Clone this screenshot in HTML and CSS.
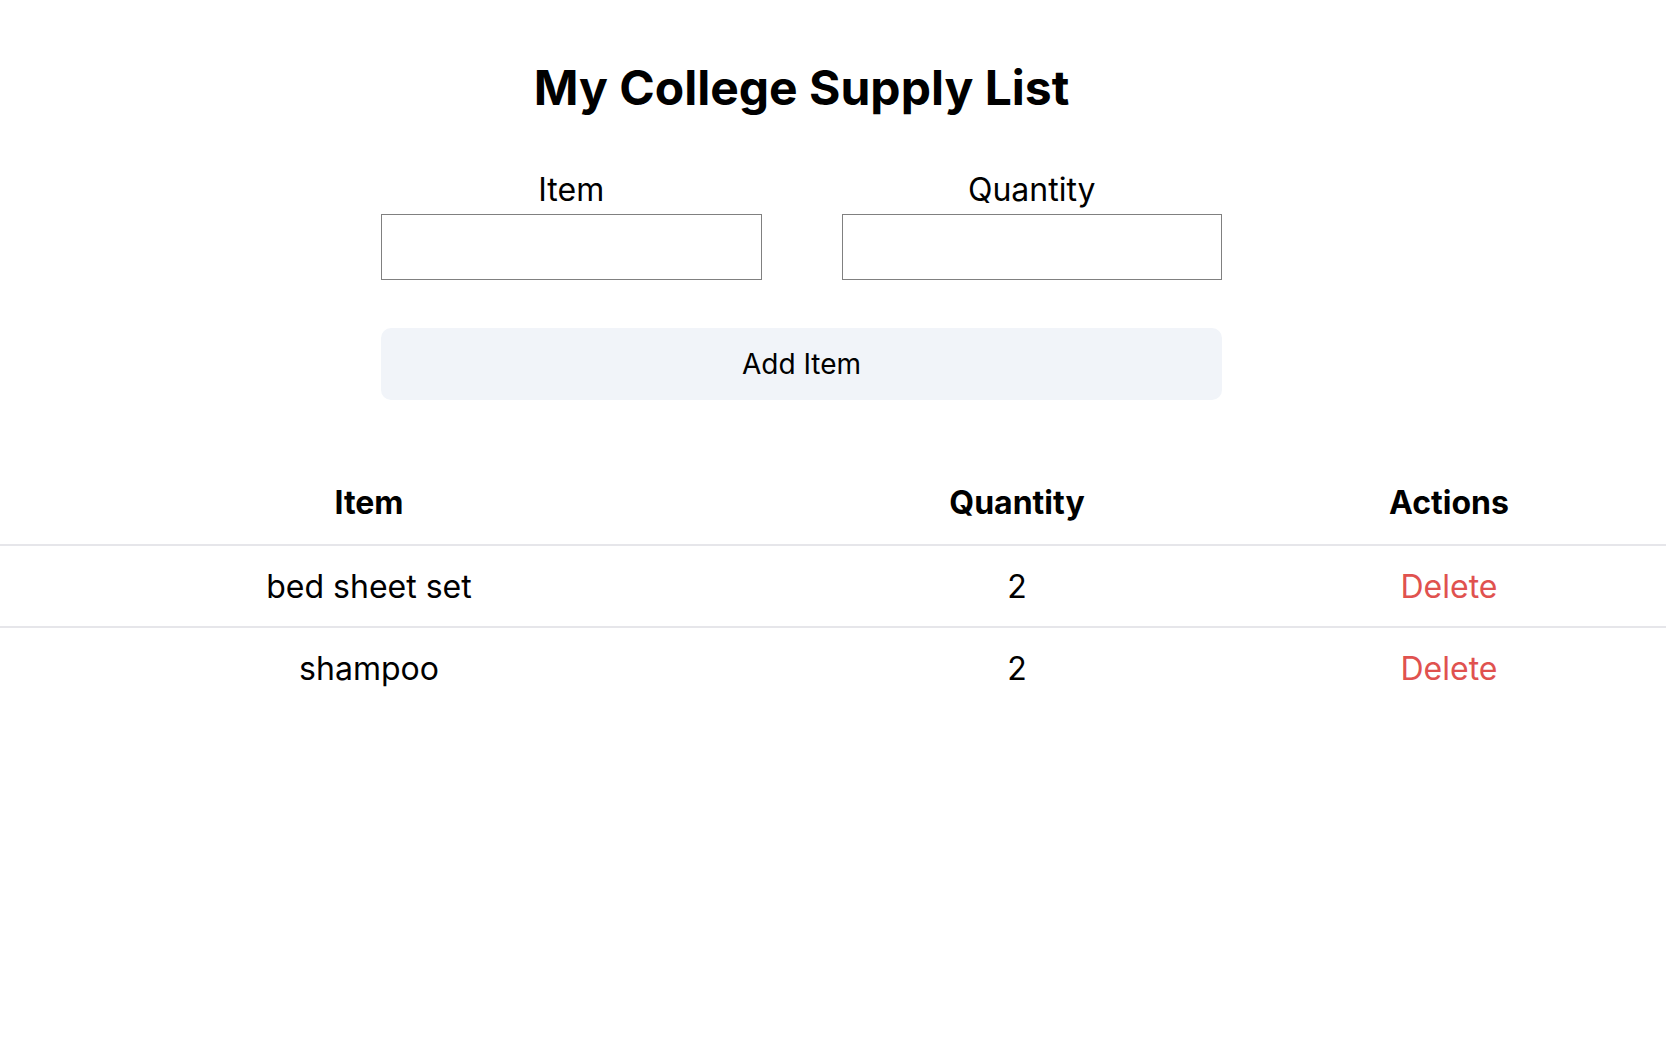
FILE: index.html
```html
<!DOCTYPE html>
<html lang="en">
<head>
<meta charset="utf-8">
<title>My College Supply List</title>
<link rel="stylesheet" href="styles.css">
</head>
<body>
<div class="app">
  <h1 class="title">My College Supply List</h1>
  <form class="form">
    <div class="fields">
      <label class="field">
        <span class="field-label">Item</span>
        <input class="field-input" type="text">
      </label>
      <label class="field">
        <span class="field-label">Quantity</span>
        <input class="field-input" type="text">
      </label>
    </div>
    <button class="add-btn" type="button">Add Item</button>
  </form>
  <table class="list">
    <colgroup>
      <col class="col-item">
      <col class="col-qty">
      <col class="col-act">
      <col class="col-pad">
    </colgroup>
    <thead>
      <tr><th>Item</th><th>Quantity</th><th>Actions</th><th></th></tr>
    </thead>
    <tbody>
      <tr><td>bed sheet set</td><td>2</td><td><span class="del">Delete</span></td><td></td></tr>
      <tr><td>shampoo</td><td>2</td><td><span class="del">Delete</span></td><td></td></tr>
    </tbody>
  </table>
</div>
</body>
</html>
```

FILE: styles.css
```css
html, body {
  margin: 0;
  padding: 0;
  background: #ffffff;
}
body {
  font-family: Inter, "Liberation Sans", sans-serif;
  color: #000000;
}
.app {
  width: 1603px;
}
.title {
  margin: 57px 0 0;
  font-size: 48px;
  line-height: 62px;
  font-weight: 700;
  text-align: center;
}
.form {
  width: 841px;
  margin: 53px auto 0;
  display: flex;
  flex-direction: column;
  gap: 48px;
}
.fields {
  display: flex;
  gap: 80px;
}
.field {
  flex: 1;
  display: flex;
  flex-direction: column;
  align-items: stretch;
  gap: 6px;
}
.field-label {
  font-size: 32px;
  line-height: 36px;
  text-align: center;
}
.field-input {
  box-sizing: border-box;
  height: 66px;
  width: 100%;
  margin: 0;
  border: 1px solid #808080;
  border-radius: 0;
  font-family: inherit;
  font-size: 30px;
  padding: 0 12px;
}
.add-btn {
  height: 72px;
  border: none;
  border-radius: 10px;
  background: #f1f4f9;
  font-family: inherit;
  font-size: 28px;
  color: #000;
  cursor: pointer;
}
.list {
  margin-top: 65px;
  width: 1666px;
  table-layout: fixed;
  border-collapse: separate;
  border-spacing: 0;
}
.col-item { width: 738px; }
.col-qty { width: 558px; }
.col-act { width: 306px; }
.col-pad { width: 64px; }
.list th,
.list td {
  height: 80px;
  padding: 0;
  text-align: center;
  vertical-align: middle;
  font-size: 32px;
}
.list th {
  height: 75px;
  padding-bottom: 4px;
  font-weight: 700;
  border-bottom: 2px solid #e6e6ea;
}
.list tbody tr:not(:last-child) td {
  border-bottom: 2px solid #e6e6ea;
}
.del {
  color: #e0524f;
}
```
